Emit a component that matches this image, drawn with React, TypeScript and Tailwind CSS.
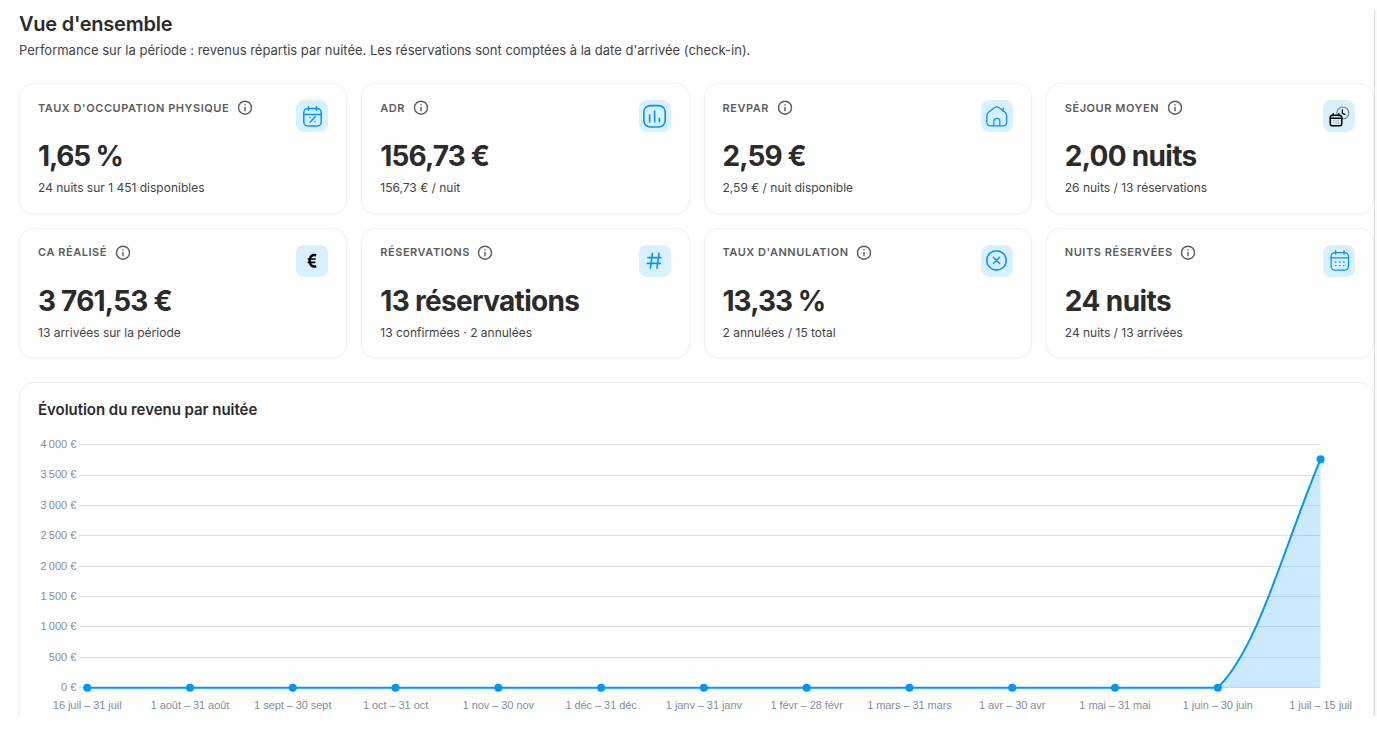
import type { ReactNode } from "react";

const blue = "#0096ff";

function InfoIcon() {
  return (
    <svg className="size-4 shrink-0" viewBox="0 0 16 16" fill="none" stroke="#5c5c5c" strokeWidth="1.4" strokeLinecap="round">
      <circle cx="8" cy="7.7" r="6.5" />
      <path d="M8 7.4v3.3" />
      <path d="M8 4.8v.2" />
    </svg>
  );
}

function Icon({ children, color = blue, width = 1.5 }: { children: ReactNode; color?: string; width?: number }) {
  return (
    <svg className="size-8" viewBox="0 0 32 32" fill="none" stroke={color} strokeWidth={width} strokeLinecap="round" strokeLinejoin="round">
      {children}
    </svg>
  );
}

const occupancyIcon = (
  <Icon>
    <rect x="7.8" y="8.6" width="17.4" height="17.3" rx="4" />
    <path d="M7.8 14.4h17.4M12.5 6.8v3.4M20.5 6.8v3.4M14 22.3l5-5.4" />
    <path d="M14.1 17.6v.1M19 21.9v.1" />
  </Icon>
);

const chartIcon = (
  <Icon width={1.6}>
    <rect x="4.8" y="5.6" width="21.4" height="21.4" rx="6.5" />
    <path d="M10.6 14.7v7.2M15.6 11v10.9M20.4 18.3v3.6" />
  </Icon>
);

const homeIcon = (
  <Icon width={1.3}>
    <path d="M5.8 15.8c0-1.7.6-2.7 1.9-3.7l5.8-4.4c1.5-1.1 3.2-1.1 4.7 0l5.6 4.4c1.3 1 1.9 2 1.9 3.7v6.2c0 2.4-1.5 3.8-3.8 3.8H9.6c-2.3 0-3.8-1.4-3.8-3.8z" />
    <path d="M12.8 25.8v-4.5c0-4 6-4 6 0v4.5M22.2 8v3" />
  </Icon>
);

const stayIcon = (
  <Icon color="#000" width={1.5}>
    <circle cx="19.8" cy="13" r="6" stroke="#7b8589" strokeWidth="1.2" />
    <path d="M19.4 9.8v3.6l2.4 1" strokeWidth="1.3" />
    <rect x="7.2" y="15.2" width="11.6" height="10.6" rx="2.4" fill="#d9f1ff" />
    <path d="M7.2 18.2h11.6M10.2 13.8v2M15.8 13.8v2" />
    <path d="M10.3 21h.1M13 21h.1M15.7 21h.1M13 23.2h.1M15.7 23.2h.1" stroke="#3d4548" strokeWidth=".8" />
  </Icon>
);

const euroIcon = (
  <Icon color="#000" width={2.2}>
    <path d="M20.2 10.3c-4-1.3-6.6 1.3-6.6 5.4s2.6 6.8 6.6 5.5" strokeWidth="2.5" strokeLinecap="butt" />
    <path d="M12.2 14h7M12.2 17.4h6.6" strokeWidth="1.6" />
  </Icon>
);

const hashIcon = (
  <Icon width={1.6}>
    <path d="M13.4 8.4l-2 14.8M20 8.4l-2 14.8M8.9 12.6h13M8.3 18.4h13" />
  </Icon>
);

const cancelIcon = (
  <Icon width={1.6}>
    <circle cx="15.5" cy="15.4" r="9.7" />
    <path d="M12.4 12.3l6.2 6.2M18.6 12.3l-6.2 6.2" />
  </Icon>
);

const nightsIcon = (
  <Icon width={1.3}>
    <rect x="8.1" y="7.6" width="17.4" height="17.5" rx="4" />
    <path d="M8.1 12.9h17.4M12.6 5.7v3.5M21 5.7v3.5" />
    <path d="M12.4 17h.5M16.5 17h.5M20.6 17h.5M12.4 20.6h.5M16.5 20.6h.5M20.6 20.6h.5" />
  </Icon>
);

const cards = [
  { label: "Taux d'occupation physique", value: "1,65 %", tracking: "tracking-[-1.15px]", note: "24 nuits sur 1 451 disponibles", icon: occupancyIcon },
  { label: "ADR", value: "156,73 €", tracking: "tracking-[-0.85px]", note: "156,73 € / nuit", icon: chartIcon },
  { label: "RevPAR", value: "2,59 €", tracking: "tracking-[-0.9px]", note: "2,59 € / nuit disponible", icon: homeIcon },
  { label: "Séjour moyen", value: "2,00 nuits", tracking: "tracking-[-0.7px]", note: "26 nuits / 13 réservations", icon: stayIcon },
  { label: "CA réalisé", value: "3 761,53 €", tracking: "tracking-[-0.8px]", note: "13 arrivées sur la période", icon: euroIcon },
  { label: "Réservations", value: "13 réservations", tracking: "tracking-[-0.68px]", note: "13 confirmées · 2 annulées", icon: hashIcon },
  { label: "Taux d'annulation", value: "13,33 %", tracking: "tracking-[-0.95px]", note: "2 annulées / 15 total", icon: cancelIcon },
  { label: "Nuits réservées", value: "24 nuits", tracking: "tracking-[-0.56px]", note: "24 nuits / 13 arrivées", icon: nightsIcon },
];

const periods = [
  "16 juil – 31 juil", "1 août – 31 août", "1 sept – 30 sept", "1 oct – 31 oct", "1 nov – 30 nov",
  "1 déc – 31 déc", "1 janv – 31 janv", "1 févr – 28 févr", "1 mars – 31 mars", "1 avr – 30 avr",
  "1 mai – 31 mai", "1 juin – 30 juin", "1 juil – 15 juil",
];

const ticks = [
  { label: "4\u202f000 €", y: 14.5, textY: 18 },
  { label: "3\u202f500 €", y: 45.5, textY: 48 },
  { label: "3\u202f000 €", y: 75.5, textY: 79 },
  { label: "2\u202f500 €", y: 105.5, textY: 109 },
  { label: "2\u202f000 €", y: 136.5, textY: 140 },
  { label: "1\u202f500 €", y: 166.5, textY: 170 },
  { label: "1\u202f000 €", y: 196.5, textY: 200 },
  { label: "500 €", y: 227.5, textY: 231 },
  { label: "0 €", y: 257.5, textY: 261 },
];

const pointX = (i: number) => 49.2 + i * 102.78;

function RevenueChart() {
  const last = pointX(12);
  const curve = `M${pointX(11)} 257.7C${pointX(11) + 41} 217 ${last - 38} 120 ${last} 29.2`;
  return (
    <svg className="block h-[300px] w-[1318px]" viewBox="0 0 1318 300" fontFamily='"Liberation Sans", Arial, sans-serif' fontSize="11" fill="#858d9b">
      {ticks.map((t) => (
        <g key={t.y}>
          <path d={`M41 ${t.y}H${last}`} stroke="#e0e1e6" />
          <text x="38.3" y={t.textY} textAnchor="end">{t.label}</text>
        </g>
      ))}
      <path d={`${curve}V257.7Z`} fill={blue} fillOpacity="0.2" />
      <path d={`M${pointX(0)} 257.7H${pointX(11)}`} stroke={blue} strokeWidth="2" />
      <path d={curve} fill="none" stroke={blue} strokeWidth="2" />
      {periods.map((p, i) => (
        <g key={p}>
          <circle cx={pointX(i)} cy={i === 12 ? 29.2 : 257.7} r="4" fill={blue} />
          <text x={pointX(i)} y="279" textAnchor="middle" letterSpacing="-0.06">{p}</text>
        </g>
      ))}
    </svg>
  );
}

export default function App() {
  return (
    <div className="h-[734px] overflow-hidden bg-white font-['Inter',sans-serif] text-[#2b2b2b]">
      <div className="flex h-[716px] overflow-hidden">
        <main className="w-[1374px] shrink-0 pt-[10px] pl-[19px]">
          <h1 className="text-xl leading-7 font-semibold tracking-[-0.25px]">Vue d'ensemble</h1>
          <p className="mt-0.5 text-[13px] leading-5 text-[#444]">
            Performance sur la période : revenus répartis par nuitée. Les réservations sont comptées à la date d'arrivée (check-in).
          </p>
          <section className="mt-[23px] grid grid-cols-4 gap-[14px]">
            {cards.map((c) => (
              <article key={c.label} className="flex h-[130.6px] justify-between rounded-[14px] border border-[#edf1f6] px-[18px] pt-4 shadow-[0_1px_3px_rgba(0,0,0,0.04)]">
                <div className="whitespace-nowrap">
                  <div className="flex h-4 items-center gap-[7.5px]">
                    <h2 className="text-[11px] font-semibold tracking-[0.55px] text-[#5c5c5c] uppercase">{c.label}</h2>
                    <InfoIcon />
                  </div>
                  <p className={`mt-[23px] text-[28px] leading-[34px] font-bold ${c.tracking}`}>{c.value}</p>
                  <p className="mt-[6px] text-xs leading-[18px] text-[#444]">{c.note}</p>
                </div>
                <div className="flex size-8 shrink-0 items-center justify-center rounded-lg bg-[#d9f1ff]">{c.icon}</div>
              </article>
            ))}
          </section>
          <section className="mt-6 h-[360px] rounded-[14px] border border-[#edf1f6] px-[18px] pt-4 shadow-[0_1px_3px_rgba(0,0,0,0.04)]">
            <h2 className="text-[15px] leading-[22px] font-semibold tracking-[-0.035px]">Évolution du revenu par nuitée</h2>
            <div className="mt-[9px]">
              <RevenueChart />
            </div>
          </section>
        </main>
        <div className="mt-[10px] flex-1 border-l border-[#dedede] bg-[#fafafa]" />
      </div>
    </div>
  );
}
